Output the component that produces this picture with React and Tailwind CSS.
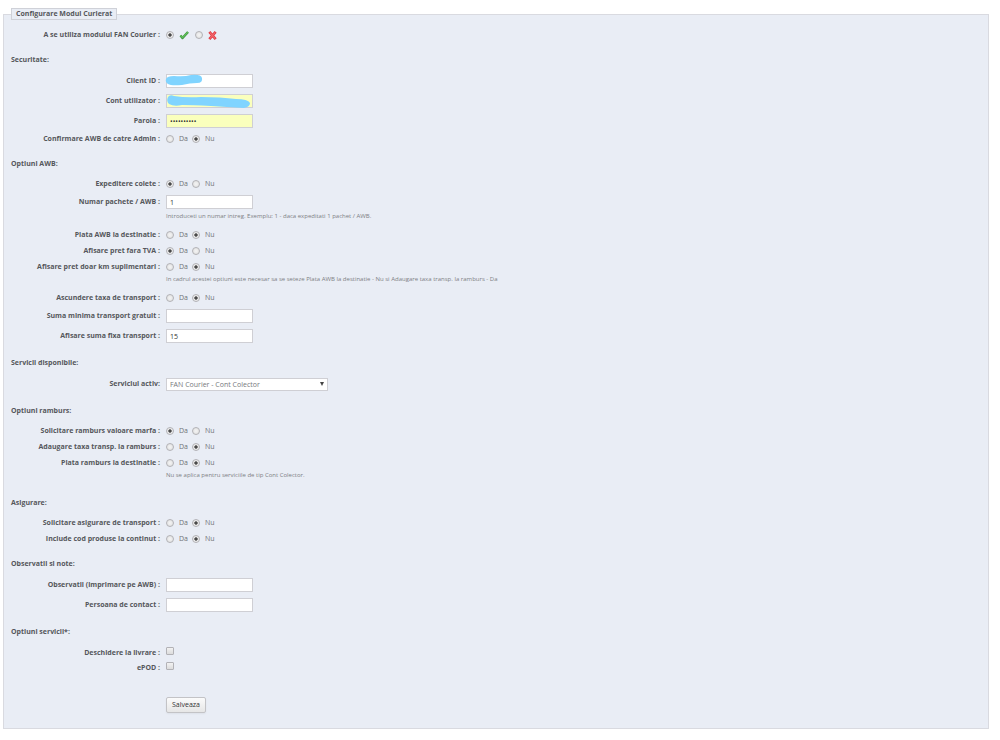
import { useId } from 'react';

const textInput =
  'h-[14px] w-[87px] border border-[#cfcfd4] px-[3px] text-[7px] leading-[12px] text-[#333] outline-none';
const radio =
  'size-2 shrink-0 appearance-none rounded-full border border-[#b2b2b6] bg-[radial-gradient(circle,#f4f4f4,#dedede)] checked:bg-[radial-gradient(circle,#4a4a4a_0_30%,#ececec_50%)]';

function Section({ title, children, className = 'pt-1.5' }) {
  return (
    <section>
      <h2 className="pt-3 font-bold">{title}</h2>
      <div className={className}>{children}</div>
    </section>
  );
}

function Row({ label, htmlFor, id, height = 'h-5', children }) {
  const Tag = htmlFor ? 'label' : 'span';
  return (
    <div className={`flex items-center gap-1.5 ${height}`}>
      <Tag id={id} htmlFor={htmlFor} className="w-[149px] shrink-0 text-right font-bold whitespace-nowrap">
        {label}
      </Tag>
      {children}
    </div>
  );
}

// Da / Nu pair
function YesNo({ label, value }) {
  const id = useId();
  return (
    <Row label={label} id={id} height="h-4">
      <div role="radiogroup" aria-labelledby={id} className="flex gap-1">
        {['Da', 'Nu'].map((opt) => (
          <label key={opt} className="flex items-center gap-[5px] pb-px text-[#707276]">
            <input type="radio" name={id} value={opt} defaultChecked={value === opt} className={radio} />
            {opt}
          </label>
        ))}
      </div>
    </Row>
  );
}

function TextField({ label, type = 'text', value = '', bg = 'bg-white', children }) {
  const id = useId();
  return (
    <Row label={label} htmlFor={id}>
      <div className="relative flex">
        <input id={id} type={type} defaultValue={value} className={`${textInput} ${bg}`} />
        {children}
      </div>
    </Row>
  );
}

function Check({ label }) {
  const id = useId();
  return (
    <Row label={label} htmlFor={id} height="h-[15px]">
      <input
        id={id}
        type="checkbox"
        className="mb-[3px] size-2 appearance-none rounded-[1px] border border-[#b2b2b6] bg-linear-to-b from-[#f2f2f2] to-[#dcdcdc] checked:from-[#555] checked:to-[#555]"
      />
    </Row>
  );
}

function Hint({ children }) {
  return <p className="pb-[7px] pl-[155px] text-[6px] leading-[8px] text-[#7d7f84]">{children}</p>;
}

export default function App() {
  return (
    <main className="pt-2 pr-[11px] pb-3 pl-[3px] font-['Open_Sans',sans-serif] text-[7px] leading-[10px] text-[#55575b]">
      <form onSubmit={(e) => e.preventDefault()}>
        <fieldset className="border border-[#d9dae0] bg-[#e9edf5] px-[7px] pb-[15px]">
          <legend className="border border-[#cfd1d8] bg-[#e9edf5] px-1 font-bold">Configurare Modul Curierat</legend>

          <div className="pt-[7px]">
            <Row label="A se utiliza modulul FAN Courier :" id="use-module" height="h-4">
              <div role="radiogroup" aria-labelledby="use-module" className="flex gap-1.5">
                <label className="flex items-center gap-[5px]">
                  <input type="radio" name="use" defaultChecked aria-label="Da" className={radio} />
                  <svg viewBox="0 0 20 20" className="size-[10px]" aria-hidden="true">
                    <path d="M3 11l4 5L18 4" fill="none" stroke="#3a9440" strokeWidth="5" strokeLinejoin="round" />
                    <path d="M3 11l4 4L18 4" fill="none" stroke="#62bd58" strokeWidth="2.5" strokeLinejoin="round" />
                  </svg>
                </label>
                <label className="flex items-center gap-[5px]">
                  <input type="radio" name="use" aria-label="Nu" className={radio} />
                  <svg viewBox="0 0 20 20" className="size-[9px]" aria-hidden="true">
                    <path d="M3 2l14 16M17 2L3 18" fill="none" stroke="#de3a42" strokeWidth="6" />
                    <path d="M4 3l12 14M16 3L4 17" fill="none" stroke="#f4666c" strokeWidth="2.5" />
                  </svg>
                </label>
              </div>
            </Row>
          </div>

          <Section title="Securitate:">
            <TextField label="Client ID :">
              <svg viewBox="0 0 87 14" className="pointer-events-none absolute inset-0 h-[14px] w-[87px] overflow-visible" aria-hidden="true">
                <path d="M0 5Q1 2 8 2Q18 3 25 1Q35 0 36 4Q37 9 31 9Q24 9 16 11Q5 12 2 10Q-1 8 0 5Z" fill="#80d4ff" />
              </svg>
            </TextField>
            <TextField label="Cont utilizator :" bg="bg-[#faffbd]">
              <svg viewBox="0 0 87 14" className="pointer-events-none absolute inset-0 h-[14px] w-[87px] overflow-visible" aria-hidden="true">
                <path d="M2 3Q4 0 8 2Q20 4 35 3Q55 3 70 5Q82 5 84 9Q84 13 78 14Q60 13 45 12Q25 11 16 11Q8 13 3 10Q0 7 2 3Z" fill="#80d4ff" />
              </svg>
            </TextField>
            <TextField label="Parola :" type="password" value="parola1234" bg="bg-[#faffbd]" />
            <YesNo label="Confirmare AWB de catre Admin :" value="Nu" />
          </Section>

          <Section title="Optiuni AWB:" className="pt-[7px]">
            <YesNo label="Expeditere colete :" value="Da" />
            <TextField label="Numar pachete / AWB :" value="1" />
            <Hint>Introduceti un numar intreg. Exemplu: 1 - daca expeditati 1 pachet / AWB.</Hint>
            <YesNo label="Plata AWB la destinatie :" value="Nu" />
            <YesNo label="Afisare pret fara TVA :" value="Da" />
            <YesNo label="Afisare pret doar km suplimentari :" value="Nu" />
            <Hint>
              In cadrul acestei optiuni este necesar sa se seteze Plata AWB la destinatie - Nu si Adaugare taxa transp. la ramburs - Da
            </Hint>
            <YesNo label="Ascundere taxa de transport :" value="Nu" />
            <TextField label="Suma minima transport gratuit :" />
            <TextField label="Afisare suma fixa transport :" value="15" />
          </Section>

          <Section title="Servicii disponibile:">
            <Row label="Serviciul activ:" htmlFor="service">
              <div className="relative flex">
                <select
                  id="service"
                  className="h-[13px] w-[162px] appearance-none border border-[#cfcfd4] bg-white px-[3px] text-[7px] leading-[11px] text-[#77797d]"
                >
                  <option>FAN Courier - Cont Colector</option>
                </select>
                <svg viewBox="0 0 4 4" className="pointer-events-none absolute top-1 right-1 size-1" aria-hidden="true">
                  <path d="M0 0h4L2 4z" fill="#444" />
                </svg>
              </div>
            </Row>
          </Section>

          <Section title="Optiuni ramburs:" className="pt-[7px]">
            <YesNo label="Solicitare ramburs valoare marfa :" value="Da" />
            <YesNo label="Adaugare taxa transp. la ramburs :" value="Nu" />
            <YesNo label="Plata ramburs la destinatie :" value="Nu" />
            <Hint>Nu se aplica pentru serviciile de tip Cont Colector.</Hint>
          </Section>

          <Section title="Asigurare:" className="pt-[7px]">
            <YesNo label="Solicitare asigurare de transport :" value="Nu" />
            <YesNo label="Include cod produse la continut :" value="Nu" />
          </Section>

          <Section title="Observatii si note:">
            <TextField label="Observatii (imprimare pe AWB) :" />
            <TextField label="Persoana de contact :" />
          </Section>

          <Section title="Optiuni servicii*:" className="pt-2">
            <Check label="Deschidere la livrare :" />
            <Check label="ePOD :" />
          </Section>

          <button
            type="submit"
            className="mt-[22px] ml-[155px] block h-4 rounded-[2px] border border-[#c3c3c6] bg-linear-to-b from-[#fbfbfb] to-[#e6e6e6] px-[5px] text-[7px] leading-[14px] text-[#333] shadow-xs"
          >
            Salveaza
          </button>
        </fieldset>
      </form>
    </main>
  );
}
